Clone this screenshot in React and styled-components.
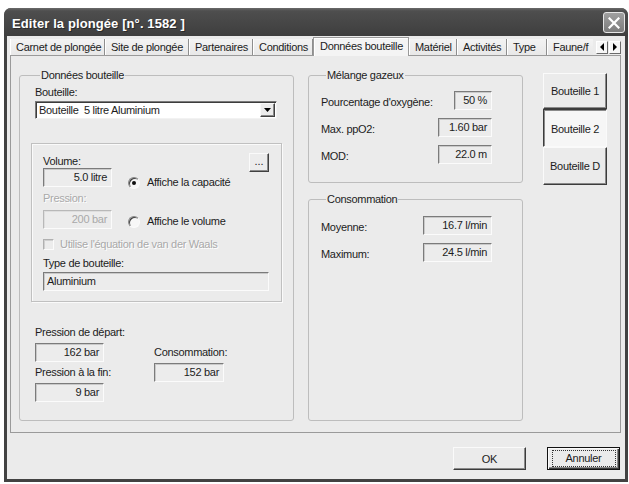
import React from "react";
import styled, { createGlobalStyle, css } from "styled-components";

const GlobalStyle = createGlobalStyle`
  html, body { margin: 0; padding: 0; background: #fff; }
  body {
    font-family: "Liberation Sans", Arial, sans-serif;
    font-size: 11px;
    letter-spacing: -0.3px;
    color: #1c1c1c;
  }
  * { box-sizing: border-box; }
`;

const Window = styled.div`
  margin: 8px 1px 0 4px;
  width: 624px;
  height: 474px;
  display: flex;
  flex-direction: column;
  background: #424242;
  border-radius: 7px 7px 0 0;
`;

const TitleBar = styled.div`
  height: 28px;
  flex-shrink: 0;
  display: flex;
  align-items: center;
  justify-content: space-between;
  padding: 3px 3px 0 8px;
  border-radius: 7px 7px 0 0;
  background: linear-gradient(#6a6a6a 0, #4e4e4e 3px, #474747 50%, #3e3e3e 100%);
`;

const Title = styled.span`
  color: #fff;
  font-weight: bold;
  font-size: 13px;
  letter-spacing: 0.1px;
  text-shadow: 1px 1px 0 #2a2a2a;
`;

const CloseButton = styled.div`
  width: 22px;
  height: 21px;
  margin-top: -2px;
  border: 1px solid #e6e6e6;
  border-radius: 3px;
  background: linear-gradient(#a0a0a0, #7c7c7c);
  display: flex;
  align-items: center;
  justify-content: center;
`;

const Body = styled.div`
  flex: 1;
  margin: 0 3px 3px 3px;
  background: #ebebeb;
  display: flex;
  flex-direction: column;
  padding: 1px 4px 9px 3px;
`;

const TabStrip = styled.div`
  height: 18px;
  display: flex;
  align-items: flex-end;
  position: relative;
  z-index: 1;
`;

const Tab = styled.div`
  width: ${(p) => p.$w}px;
  height: 16px;
  flex-shrink: 0;
  padding: 0 0 0 6px;
  line-height: 16px;
  white-space: nowrap;
  overflow: hidden;
  border-right: 1px solid #8e8e8e;
  box-shadow: inset 1px 0 0 #fff;
  background: linear-gradient(#f3f3f3, #e8e8e8);
  ${(p) =>
    p.$active &&
    css`
      height: 19px;
      margin-bottom: -1px;
      line-height: 17px;
      background: #f4f4f4;
      border: 1px solid #9a9a9a;
      border-bottom: none;
      box-shadow: inset 1px 1px 0 #fff;
    `}
  ${(p) =>
    p.$clipped &&
    css`
      border-right: none;
    `}
`;

const Spinner = styled.div`
  display: flex;
  gap: 1px;
  align-self: center;
  margin-left: auto;
  margin-top: 2px;
`;

const SpinButton = styled.div`
  width: 12px;
  height: 13px;
  background: #f6f6f6;
  border: 1px solid;
  border-color: #fff #6a6a6a #6a6a6a #fff;
  display: flex;
  align-items: center;
  justify-content: center;
`;

const Panel = styled.div`
  height: 378px;
  border: 1px solid #9a9a9a;
  display: flex;
  gap: 14px;
  padding: 13px 0 11px 8px;
`;

const Group = styled.fieldset`
  margin: 0;
  min-width: 0;
  border: 1px solid #bdbdbd;
  border-radius: 3px;
  padding: ${(p) => p.$pad};
`;

const Legend = styled.legend`
  margin-left: 5px;
  padding: 0 1px;
  line-height: 13px;
`;

const LeftGroup = styled(Group)`
  width: 275px;
`;

const Label = styled.div`
  line-height: 13px;
  white-space: nowrap;
  color: ${(p) => (p.$disabled ? "#a9a9a9" : "inherit")};
  ${(p) => p.$disabled && "text-shadow: 1px 1px 0 #fff;"}
`;

const Combo = styled.div`
  margin-top: 2px;
  height: 18px;
  background: #fff;
  border: 1px solid;
  border-color: #7a7a7a #f2f2f2 #f2f2f2 #7a7a7a;
  box-shadow: inset 1px 1px 0 #3c3c3c;
  display: flex;
  align-items: center;
  justify-content: space-between;
  padding: 0 1px 0 3px;
`;

const DropButton = styled.div`
  width: 15px;
  height: 14px;
  background: #ebebeb;
  border: 1px solid;
  border-color: #f8f8f8 #404040 #404040 #f8f8f8;
  box-shadow: inset -1px -1px 0 #8a8a8a;
  display: flex;
  align-items: center;
  justify-content: center;
`;

const InnerBox = styled.div`
  margin: 24px -5px 0 -4px;
  border: 1px solid #c0c0c0;
  box-shadow: inset 1px 1px 0 #fafafa, 1px 1px 0 #fafafa;
  padding: 9px 12px 10px 11px;
  display: grid;
  grid-template-columns: 69px 1fr 20px;
  grid-template-rows: 15px 19px 23px 19px 25px 18px 19px;
  column-gap: 16px;
`;

const Cell = styled.div`
  grid-column: ${(p) => p.$col};
  grid-row: ${(p) => p.$row};
  align-self: ${(p) => p.$align || "stretch"};
  margin-top: ${(p) => p.$mt || 0}px;
  display: flex;
  align-items: center;
`;

const Field = styled.div`
  width: ${(p) => (p.$w ? `${p.$w}px` : "100%")};
  height: 19px;
  flex-shrink: 0;
  border: 1px solid;
  border-color: #7b7b7b #fbfbfb #fbfbfb #7b7b7b;
  box-shadow: inset 1px 1px 0 #c9c9c9;
  background: #ececec;
  line-height: 17px;
  padding: 0 4px 0 3px;
  text-align: ${(p) => (p.$left ? "left" : "right")};
  white-space: nowrap;
  ${(p) =>
    p.$disabled &&
    css`
      color: #a9a9a9;
      border-color: #b8b8b8 #fbfbfb #fbfbfb #b8b8b8;
      box-shadow: inset 1px 1px 0 #dedede;
    `}
`;

const SmallButton = styled.button`
  width: 20px;
  height: 19px;
  padding: 0 0 4px;
  font: inherit;
  color: #1c1c1c;
  background: #ececec;
  border: 1px solid;
  border-color: #fafafa #404040 #404040 #fafafa;
  box-shadow: inset -1px -1px 0 #8a8a8a;
`;

const RadioRow = styled.label`
  display: flex;
  align-items: center;
  gap: 7px;
  line-height: 13px;
  white-space: nowrap;
`;

const RadioDot = styled.span`
  width: 12px;
  height: 12px;
  border-radius: 50%;
  background: #f7f7f7;
  border: 1px solid;
  border-color: #858585 #fbfbfb #fbfbfb #858585;
  box-shadow: inset 1px 1px 0 #3f3f3f;
  display: flex;
  align-items: center;
  justify-content: center;
  &::after {
    content: "";
    width: 4px;
    height: 4px;
    border-radius: 50%;
    background: ${(p) => (p.$checked ? "#111" : "transparent")};
  }
`;

const CheckBox = styled.span`
  width: 11px;
  height: 11px;
  background: #ececec;
  border: 1px solid;
  border-color: #b0b0b0 #fbfbfb #fbfbfb #b0b0b0;
  box-shadow: inset 1px 1px 0 #d0d0d0;
`;

const CheckRow = styled.div`
  display: flex;
  align-items: center;
  gap: 6px;
  margin-bottom: 3px;
  color: #a9a9a9;
  text-shadow: 1px 1px 0 #fff;
  line-height: 13px;
`;

const Bottom = styled.div`
  margin-top: 24px;
  display: flex;
`;

const Column = styled.div`
  width: ${(p) => p.$w || "auto"};
  padding-top: ${(p) => p.$pt || 0}px;
  display: flex;
  flex-direction: column;
`;

const Gap = styled.div`
  height: ${(p) => p.$h}px;
`;

const RightColumn = styled.div`
  width: 215px;
  display: flex;
  flex-direction: column;
  gap: 10px;
`;

const Rows = styled.div`
  display: flex;
  flex-direction: column;
  gap: 8px;
`;

const Row = styled.div`
  display: flex;
  align-items: center;
  justify-content: space-between;
  & > ${Label} {
    margin-top: 3px;
  }
`;

const ConsoGroup = styled(Group)`
  flex: 1;
`;

const ButtonColumn = styled.div`
  width: 64px;
  margin: 4px 0 0 6px;
  display: flex;
  flex-direction: column;
`;

const BottleButton = styled.div`
  height: ${(p) => p.$h}px;
  display: flex;
  align-items: center;
  justify-content: center;
  background: #ebebeb;
  border: 1px solid;
  border-color: #fafafa #3c3c3c #3c3c3c #fafafa;
  box-shadow: inset -1px -1px 0 #8a8a8a;
  ${(p) =>
    p.$pressed &&
    css`
      background: #f6f6f6;
      border-color: #3c3c3c #fafafa #fafafa #3c3c3c;
      box-shadow: inset 1px 1px 0 #8a8a8a;
      padding-top: 2px;
    `}
`;

const Footer = styled.div`
  margin-top: 14px;
  display: flex;
  justify-content: flex-end;
  gap: 21px;
  padding-right: 1px;
`;

const PushButton = styled.div`
  width: ${(p) => p.$w}px;
  height: 23px;
  display: flex;
  align-items: center;
  justify-content: center;
  background: #ebebeb;
  border: 1px solid;
  border-color: #fafafa #3c3c3c #3c3c3c #fafafa;
  box-shadow: inset -1px -1px 0 #8a8a8a;
  ${(p) =>
    p.$default &&
    css`
      border: 1px solid #111;
      box-shadow: inset 1px 1px 0 #fafafa, inset -1px -1px 0 #3c3c3c,
        inset -2px -2px 0 #8a8a8a;
      & > span {
        outline: 1px dotted #333;
        outline-offset: 0;
        width: 62px;
        height: 15px;
        line-height: 15px;
        text-align: center;
      }
    `}
`;

const tabs = [
  { label: "Carnet de plongée", w: 95 },
  { label: "Site de plongée", w: 84 },
  { label: "Partenaires", w: 64 },
  { label: "Conditions", w: 60 },
  { label: "Données bouteille", w: 96, active: true },
  { label: "Matériel", w: 48 },
  { label: "Activités", w: 50 },
  { label: "Type", w: 40 },
  { label: "Faune/f", w: 46, clipped: true },
];

function Triangle({ dir }) {
  const pts = dir === "left" ? "4,0 4,8 0,4" : dir === "right" ? "0,0 0,8 4,4" : "0,0 7,0 3.5,4";
  const w = dir === "down" ? 7 : 4;
  const h = dir === "down" ? 4 : 8;
  return (
    <svg width={w} height={h} viewBox={`0 0 ${w} ${h}`}>
      <polygon points={pts} fill="#000" />
    </svg>
  );
}

export default function App() {
  return (
    <>
      <GlobalStyle />
      <Window>
        <TitleBar>
          <Title>Editer la plongée [n°. 1582 ]</Title>
          <CloseButton>
            <svg width="12" height="12" viewBox="0 0 12 12">
              <path d="M1.5 1.5 L10.5 10.5 M10.5 1.5 L1.5 10.5" stroke="#fff" strokeWidth="2.2" strokeLinecap="square" />
            </svg>
          </CloseButton>
        </TitleBar>
        <Body>
          <TabStrip>
            {tabs.map((t) => (
              <Tab key={t.label} $w={t.w} $active={t.active} $clipped={t.clipped}>
                {t.label}
              </Tab>
            ))}
            <Spinner>
              <SpinButton>
                <Triangle dir="left" />
              </SpinButton>
              <SpinButton>
                <Triangle dir="right" />
              </SpinButton>
            </Spinner>
          </TabStrip>
          <Panel>
            <LeftGroup $pad="4px 16px 0 15px">
              <Legend>Données bouteille</Legend>
              <Label>Bouteille:</Label>
              <Combo>
                <span>Bouteille&nbsp; 5 litre Aluminium</span>
                <DropButton>
                  <Triangle dir="down" />
                </DropButton>
              </Combo>
              <InnerBox>
                <Cell $col="1 / 3" $row="1" $align="end">
                  <Label>Volume:</Label>
                </Cell>
                <Cell $col="3" $row="1 / 3" $align="start">
                  <SmallButton>...</SmallButton>
                </Cell>
                <Cell $col="1" $row="2">
                  <Field $w={69}>5.0 litre</Field>
                </Cell>
                <Cell $col="2 / 4" $row="2" $align="start" $mt={8}>
                  <RadioRow>
                    <RadioDot $checked />
                    Affiche la capacité
                  </RadioRow>
                </Cell>
                <Cell $col="1 / 3" $row="3">
                  <Label $disabled>Pression:</Label>
                </Cell>
                <Cell $col="1" $row="4">
                  <Field $w={69} $disabled>
                    200 bar
                  </Field>
                </Cell>
                <Cell $col="2 / 4" $row="4" $align="start" $mt={5}>
                  <RadioRow>
                    <RadioDot />
                    Affiche le volume
                  </RadioRow>
                </Cell>
                <Cell $col="1 / 4" $row="5" $align="end">
                  <CheckRow>
                    <CheckBox />
                    Utilise l'équation de van der Waals
                  </CheckRow>
                </Cell>
                <Cell $col="1 / 4" $row="6">
                  <Label>Type de bouteille:</Label>
                </Cell>
                <Cell $col="1 / 4" $row="7">
                  <Field $left>Aluminium</Field>
                </Cell>
              </InnerBox>
              <Bottom>
                <Column $w="119px">
                  <Label>Pression de départ:</Label>
                  <Gap $h={4} />
                  <Field $w={69}>162 bar</Field>
                  <Gap $h={4} />
                  <Label>Pression à la fin:</Label>
                  <Gap $h={4} />
                  <Field $w={69}>9 bar</Field>
                </Column>
                <Column $pt={20}>
                  <Label>Consommation:</Label>
                  <Gap $h={4} />
                  <Field $w={70}>152 bar</Field>
                </Column>
              </Bottom>
            </LeftGroup>
            <RightColumn>
              <Group $pad="9px 30px 18px 12px">
                <Legend>Mélange gazeux</Legend>
                <Rows>
                  <Row>
                    <Label>Pourcentage d'oxygène:</Label>
                    <Field $w={38}>50 %</Field>
                  </Row>
                  <Row>
                    <Label>Max. ppO2:</Label>
                    <Field $w={54}>1.60 bar</Field>
                  </Row>
                  <Row>
                    <Label>MOD:</Label>
                    <Field $w={54}>22.0 m</Field>
                  </Row>
                </Rows>
              </Group>
              <ConsoGroup $pad="10px 30px 0 12px">
                <Legend>Consommation</Legend>
                <Rows>
                  <Row>
                    <Label>Moyenne:</Label>
                    <Field $w={69}>16.7 l/min</Field>
                  </Row>
                  <Row>
                    <Label>Maximum:</Label>
                    <Field $w={69}>24.5 l/min</Field>
                  </Row>
                </Rows>
              </ConsoGroup>
            </RightColumn>
            <ButtonColumn>
              <BottleButton $h={36}>Bouteille 1</BottleButton>
              <BottleButton $h={38} $pressed>
                Bouteille 2
              </BottleButton>
              <BottleButton $h={38}>Bouteille D</BottleButton>
            </ButtonColumn>
          </Panel>
          <Footer>
            <PushButton $w={73}>
              <span>OK</span>
            </PushButton>
            <PushButton $w={73} $default>
              <span>Annuler</span>
            </PushButton>
          </Footer>
        </Body>
      </Window>
    </>
  );
}
